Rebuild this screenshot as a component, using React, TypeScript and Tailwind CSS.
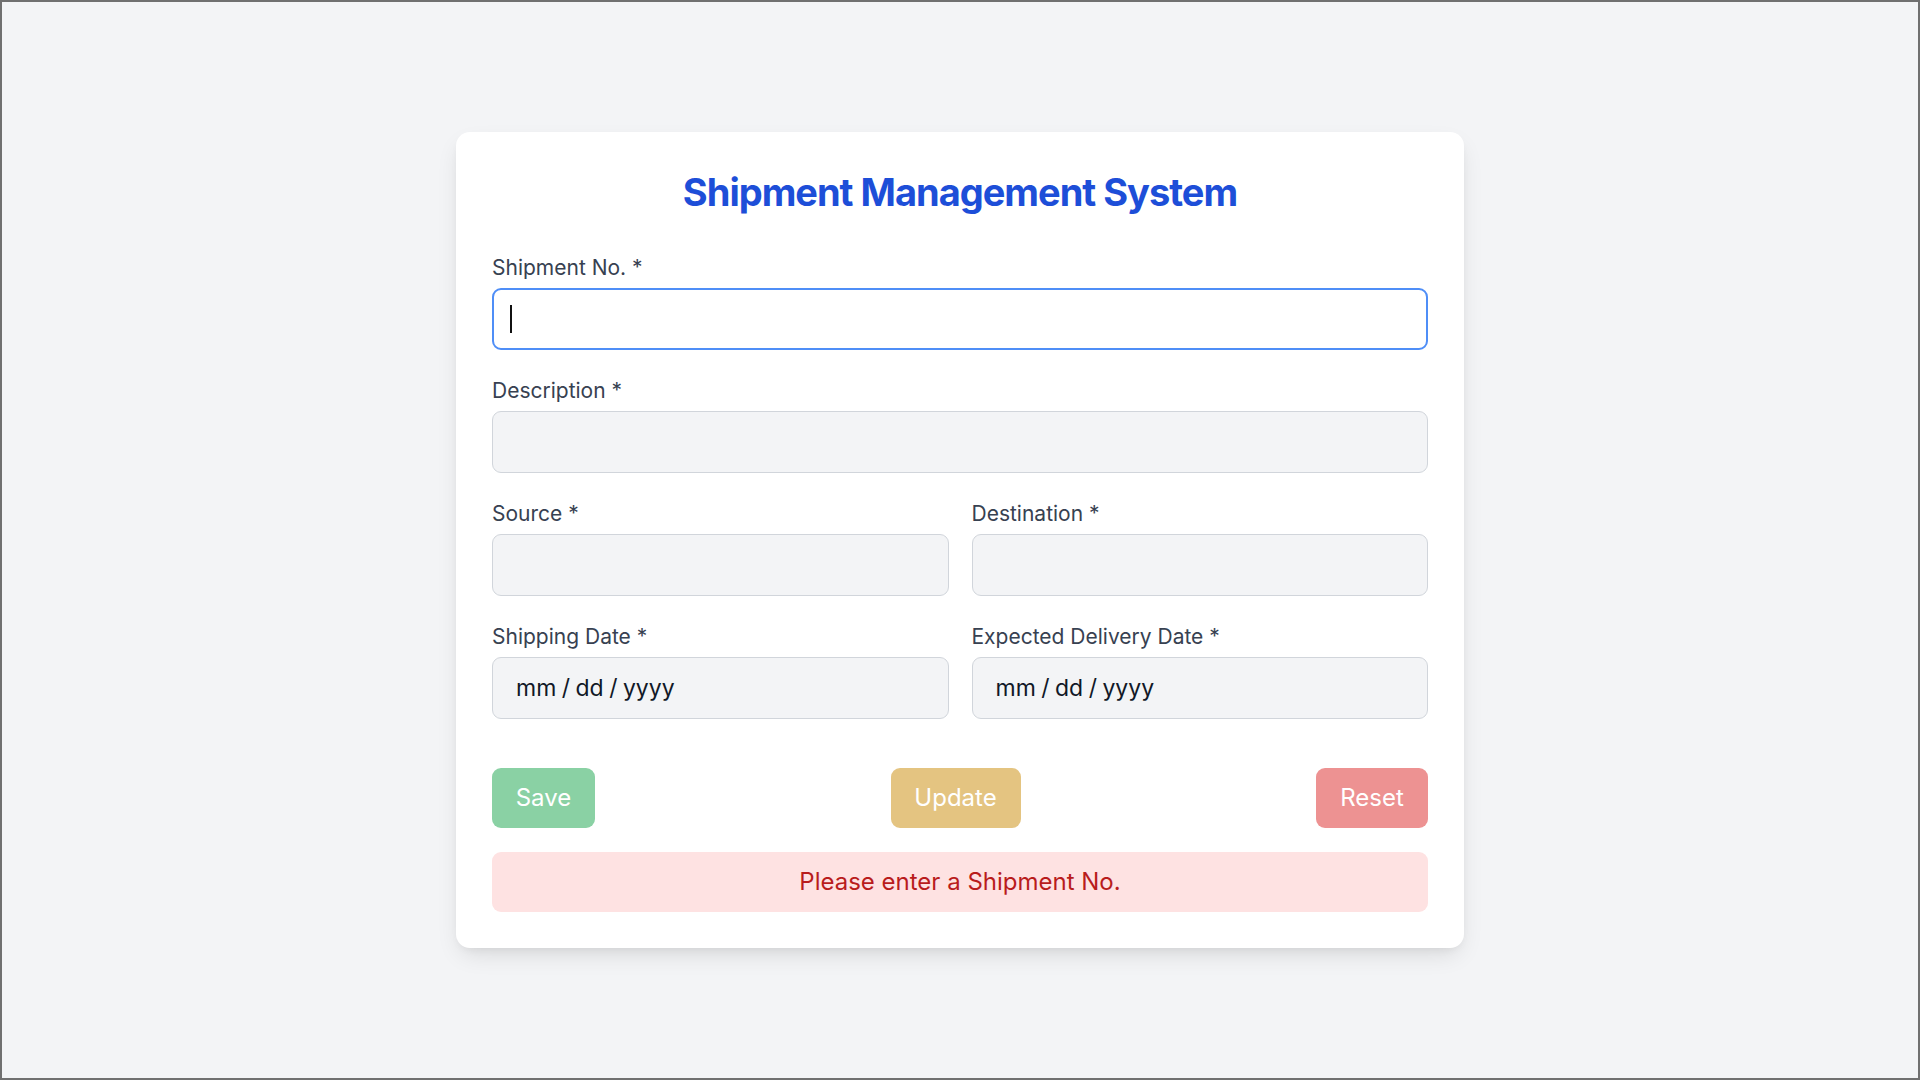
import { useState } from 'react';

function Field({
  label,
  placeholder,
  focused = false,
}: {
  label: string;
  placeholder?: string;
  focused?: boolean;
}) {
  return (
    <div className="flex flex-col">
      <label className="mb-[6px] pt-[2px] text-[21px] leading-[28px] font-normal text-[#374151]">{label}</label>
      <div className="relative">
        <input
          type="text"
          placeholder={placeholder}
          className={
            focused
              ? 'h-[62px] w-full rounded-[9px] border-2 border-[#4f8ef7] bg-white px-[18px] text-[20px] text-[#111827] outline-none'
              : 'h-[62px] w-full rounded-[9px] border border-[#d1d5db] bg-[#f3f4f6] px-[23px] text-[23px] [word-spacing:-1px] text-[#111827] outline-none placeholder:text-[#111827]'
          }
        />
        {focused && (
          <span className="pointer-events-none absolute left-[18px] top-[17px] h-[28px] w-[2px] bg-[#111]" />
        )}
      </div>
    </div>
  );
}

export default function App() {
  const [message] = useState('Please enter a Shipment No.');

  return (
    <div
      className="box-border flex h-screen w-full items-start justify-center border-2 border-[#707070] bg-[#f3f4f6] pt-[130px]"
      style={{ fontFamily: 'Inter, "Noto Sans", sans-serif' }}
    >
      <div className="w-[1008px] rounded-[14px] bg-white px-[36px] pt-[36px] pb-[36px] shadow-[0_10px_25px_-5px_rgba(0,0,0,0.12),0_4px_10px_-4px_rgba(0,0,0,0.08)]">
        <h1 className="mb-[36px] text-center text-[38px] leading-[48px] font-bold tracking-[-1px] text-[#1d4ed8]">
          Shipment Management System
        </h1>

        <div className="flex flex-col gap-[25px]">
          <Field label="Shipment No. *" focused />
          <Field label="Description *" />
          <div className="grid grid-cols-2 gap-[23px]">
            <Field label="Source *" />
            <Field label="Destination *" />
          </div>
          <div className="grid grid-cols-2 gap-[23px]">
            <Field label="Shipping Date *" placeholder="mm / dd / yyyy" />
            <Field label="Expected Delivery Date *" placeholder="mm / dd / yyyy" />
          </div>
        </div>

        <div className="mt-[49px] flex items-center justify-between">
          <button className="h-[60px] w-[103px] rounded-[9px] bg-[#8ad1a4] text-[24px] text-white">Save</button>
          <button className="h-[60px] w-[130px] rounded-[9px] bg-[#e4c481] text-[24px] text-white">Update</button>
          <button className="h-[60px] w-[112px] rounded-[9px] bg-[#ed9292] text-[24px] text-white">Reset</button>
        </div>

        <div className="mt-[24px] flex h-[60px] items-center justify-center rounded-[9px] bg-[#fee2e2] text-[24px] text-[#b91c1c]">
          {message}
        </div>
      </div>
    </div>
  );
}
